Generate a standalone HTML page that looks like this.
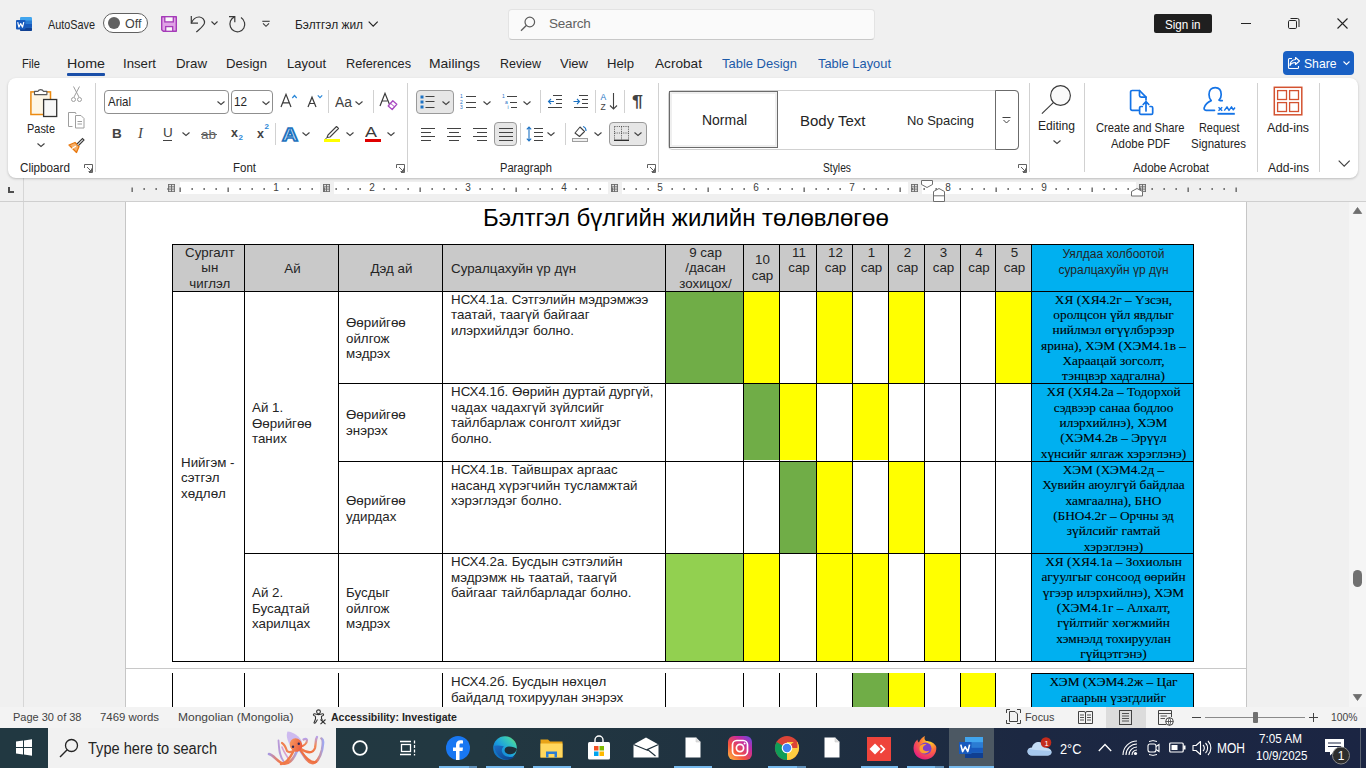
<!DOCTYPE html><html><head><meta charset="utf-8"><style>
*{margin:0;padding:0;box-sizing:border-box}
html,body{width:1366px;height:768px;overflow:hidden;background:#f0f0f0;font-family:"Liberation Sans",sans-serif;color:#242424}
.ab{position:absolute}
.t{position:absolute;white-space:nowrap;line-height:1}
svg{position:absolute;overflow:visible}
.doc{font-family:"Liberation Sans",sans-serif;color:#000}
.ser{font-family:"Liberation Serif",serif;color:#000;-webkit-text-stroke:0.1px #000}
</style></head><body>

<div class="ab" style="left:23px;top:201px;width:1px;height:506px;background:#d6d6d6"></div>
<div class="ab" style="left:126px;top:202px;width:1120px;height:505px;background:#fff"></div>
<div class="ab" style="left:125px;top:202px;width:1px;height:505px;background:#c6c6c6"></div>
<div class="ab" style="left:1246px;top:202px;width:1px;height:505px;background:#c6c6c6"></div>
<div class="ab" style="left:1349px;top:201px;width:17px;height:506px;background:#f5f5f5"></div>
<svg style="left:1353px;top:207px;" width="9" height="7" viewBox="0 0 9 7"><path d="M4.5 0.5 L8.7 6.5 L0.3 6.5 Z" fill="#6e6e6e" stroke="#6e6e6e" stroke-width="0.8" stroke-linejoin="round"/></svg>
<svg style="left:1353px;top:694px;" width="9" height="7" viewBox="0 0 9 7"><path d="M4.5 6.5 L8.7 0.5 L0.3 0.5 Z" fill="#6e6e6e" stroke="#6e6e6e" stroke-width="0.8" stroke-linejoin="round"/></svg>
<div class="ab" style="left:1353px;top:570px;width:9px;height:17px;background:#707070;border-radius:4.5px"></div>
<div class="ab" style="left:126px;top:668px;width:1120px;height:1px;background:#c8c8c8"></div>
<div class="t doc" style="left:483.00px;top:206.48px;font-size:24px;">Бэлтгэл бүлгийн жилийн төлөвлөгөө</div>
<div class="ab" style="left:172px;top:244px;width:859px;height:47px;background:#c9c9c9"></div>
<div class="ab" style="left:1031px;top:244px;width:162px;height:47px;background:#00b0f0"></div>
<div class="ab" style="left:665px;top:291px;width:78px;height:92px;background:#70ad47"></div>
<div class="ab" style="left:743px;top:291px;width:36px;height:92px;background:#ffff00"></div>
<div class="ab" style="left:816px;top:291px;width:36px;height:92px;background:#ffff00"></div>
<div class="ab" style="left:888px;top:291px;width:36px;height:92px;background:#ffff00"></div>
<div class="ab" style="left:995px;top:291px;width:36px;height:92px;background:#ffff00"></div>
<div class="ab" style="left:1031px;top:291px;width:162px;height:92px;background:#00b0f0"></div>
<div class="ab" style="left:743px;top:383px;width:36px;height:77px;background:#70ad47"></div>
<div class="ab" style="left:779px;top:383px;width:37px;height:77px;background:#ffff00"></div>
<div class="ab" style="left:852px;top:383px;width:36px;height:77px;background:#ffff00"></div>
<div class="ab" style="left:1031px;top:383px;width:162px;height:78px;background:#00b0f0"></div>
<div class="ab" style="left:779px;top:461px;width:37px;height:92px;background:#70ad47"></div>
<div class="ab" style="left:816px;top:461px;width:36px;height:92px;background:#ffff00"></div>
<div class="ab" style="left:888px;top:461px;width:36px;height:92px;background:#ffff00"></div>
<div class="ab" style="left:1031px;top:461px;width:162px;height:92px;background:#00b0f0"></div>
<div class="ab" style="left:665px;top:553px;width:78px;height:108px;background:#92d050"></div>
<div class="ab" style="left:743px;top:553px;width:36px;height:108px;background:#ffff00"></div>
<div class="ab" style="left:816px;top:553px;width:36px;height:108px;background:#ffff00"></div>
<div class="ab" style="left:852px;top:553px;width:36px;height:108px;background:#ffff00"></div>
<div class="ab" style="left:924px;top:553px;width:36px;height:108px;background:#ffff00"></div>
<div class="ab" style="left:1031px;top:553px;width:162px;height:108px;background:#00b0f0"></div>
<div class="ab" style="left:172px;top:244px;width:1px;height:418px;background:#000"></div>
<div class="ab" style="left:244px;top:244px;width:1px;height:418px;background:#000"></div>
<div class="ab" style="left:338px;top:244px;width:1px;height:418px;background:#000"></div>
<div class="ab" style="left:442px;top:244px;width:1px;height:418px;background:#000"></div>
<div class="ab" style="left:665px;top:244px;width:1px;height:418px;background:#000"></div>
<div class="ab" style="left:743px;top:244px;width:1px;height:418px;background:#000"></div>
<div class="ab" style="left:779px;top:244px;width:1px;height:418px;background:#000"></div>
<div class="ab" style="left:816px;top:244px;width:1px;height:418px;background:#000"></div>
<div class="ab" style="left:852px;top:244px;width:1px;height:418px;background:#000"></div>
<div class="ab" style="left:888px;top:244px;width:1px;height:418px;background:#000"></div>
<div class="ab" style="left:924px;top:244px;width:1px;height:418px;background:#000"></div>
<div class="ab" style="left:960px;top:244px;width:1px;height:418px;background:#000"></div>
<div class="ab" style="left:995px;top:244px;width:1px;height:418px;background:#000"></div>
<div class="ab" style="left:1031px;top:244px;width:1px;height:418px;background:#000"></div>
<div class="ab" style="left:1193px;top:244px;width:1px;height:418px;background:#000"></div>
<div class="ab" style="left:172px;top:244px;width:1022px;height:1px;background:#000"></div>
<div class="ab" style="left:172px;top:291px;width:1022px;height:1px;background:#000"></div>
<div class="ab" style="left:172px;top:661px;width:1022px;height:1px;background:#000"></div>
<div class="ab" style="left:338px;top:383px;width:856px;height:1px;background:#000"></div>
<div class="ab" style="left:338px;top:461px;width:856px;height:1px;background:#000"></div>
<div class="ab" style="left:244px;top:553px;width:950px;height:1px;background:#000"></div>
<div class="ab" style="left:852px;top:673px;width:36px;height:34px;background:#70ad47"></div>
<div class="ab" style="left:888px;top:673px;width:36px;height:34px;background:#ffff00"></div>
<div class="ab" style="left:960px;top:673px;width:35px;height:34px;background:#ffff00"></div>
<div class="ab" style="left:1031px;top:673px;width:162px;height:34px;background:#00b0f0"></div>
<div class="ab" style="left:172px;top:673px;width:1px;height:34px;background:#000"></div>
<div class="ab" style="left:244px;top:673px;width:1px;height:34px;background:#000"></div>
<div class="ab" style="left:338px;top:673px;width:1px;height:34px;background:#000"></div>
<div class="ab" style="left:442px;top:673px;width:1px;height:34px;background:#000"></div>
<div class="ab" style="left:665px;top:673px;width:1px;height:34px;background:#000"></div>
<div class="ab" style="left:743px;top:673px;width:1px;height:34px;background:#000"></div>
<div class="ab" style="left:779px;top:673px;width:1px;height:34px;background:#000"></div>
<div class="ab" style="left:816px;top:673px;width:1px;height:34px;background:#000"></div>
<div class="ab" style="left:852px;top:673px;width:1px;height:34px;background:#000"></div>
<div class="ab" style="left:888px;top:673px;width:1px;height:34px;background:#000"></div>
<div class="ab" style="left:924px;top:673px;width:1px;height:34px;background:#000"></div>
<div class="ab" style="left:960px;top:673px;width:1px;height:34px;background:#000"></div>
<div class="ab" style="left:995px;top:673px;width:1px;height:34px;background:#000"></div>
<div class="ab" style="left:1031px;top:673px;width:1px;height:34px;background:#000"></div>
<div class="ab" style="left:1193px;top:673px;width:1px;height:34px;background:#000"></div>
<div class="ab" style="left:1031px;top:673px;width:163px;height:1px;background:#000"></div>
<div class="t" style="left:173.80px;top:245.72px;width:72px;text-align:center;font-size:13.33px;">Сургалт</div>
<div class="t" style="left:173.80px;top:261.17px;width:72px;text-align:center;font-size:13.33px;">ын</div>
<div class="t" style="left:173.80px;top:276.62px;width:72px;text-align:center;font-size:13.33px;">чиглэл</div>
<div class="t" style="left:245.50px;top:261.92px;width:94px;text-align:center;font-size:13.33px;">Ай</div>
<div class="t" style="left:339.50px;top:261.92px;width:104px;text-align:center;font-size:13.33px;">Дэд ай</div>
<div class="t" style="left:451.00px;top:261.92px;font-size:13.33px;">Суралцахуйн үр дүн</div>
<div class="t" style="left:666.50px;top:245.72px;width:78px;text-align:center;font-size:13.33px;">9 сар</div>
<div class="t" style="left:666.50px;top:261.17px;width:78px;text-align:center;font-size:13.33px;">/дасан</div>
<div class="t" style="left:666.50px;top:276.62px;width:78px;text-align:center;font-size:13.33px;">зохицох/</div>
<div class="t" style="left:744.50px;top:253.22px;width:36px;text-align:center;font-size:13.33px;">10</div>
<div class="t" style="left:744.50px;top:268.67px;width:36px;text-align:center;font-size:13.33px;">сар</div>
<div class="t" style="left:779.00px;top:245.72px;width:40px;text-align:center;font-size:13.33px;">11</div>
<div class="t" style="left:779.00px;top:261.17px;width:40px;text-align:center;font-size:13.33px;">сар</div>
<div class="t" style="left:815.50px;top:245.72px;width:40px;text-align:center;font-size:13.33px;">12</div>
<div class="t" style="left:815.50px;top:261.17px;width:40px;text-align:center;font-size:13.33px;">сар</div>
<div class="t" style="left:851.50px;top:245.72px;width:40px;text-align:center;font-size:13.33px;">1</div>
<div class="t" style="left:851.50px;top:261.17px;width:40px;text-align:center;font-size:13.33px;">сар</div>
<div class="t" style="left:887.50px;top:245.72px;width:40px;text-align:center;font-size:13.33px;">2</div>
<div class="t" style="left:887.50px;top:261.17px;width:40px;text-align:center;font-size:13.33px;">сар</div>
<div class="t" style="left:923.50px;top:245.72px;width:40px;text-align:center;font-size:13.33px;">3</div>
<div class="t" style="left:923.50px;top:261.17px;width:40px;text-align:center;font-size:13.33px;">сар</div>
<div class="t" style="left:959.00px;top:245.72px;width:40px;text-align:center;font-size:13.33px;">4</div>
<div class="t" style="left:959.00px;top:261.17px;width:40px;text-align:center;font-size:13.33px;">сар</div>
<div class="t" style="left:994.50px;top:245.72px;width:40px;text-align:center;font-size:13.33px;">5</div>
<div class="t" style="left:994.50px;top:261.17px;width:40px;text-align:center;font-size:13.33px;">сар</div>
<div class="t" style="left:1033.50px;top:248.24px;width:160px;text-align:center;font-size:12px;">Уялдаа холбоотой</div>
<div class="t" style="left:1033.50px;top:263.84px;width:160px;text-align:center;font-size:12px;">суралцахуйн үр дүн</div>
<div class="t" style="left:181.00px;top:455.72px;font-size:13.33px;">Нийгэм -</div>
<div class="t" style="left:181.00px;top:471.17px;font-size:13.33px;">сэтгэл</div>
<div class="t" style="left:181.00px;top:486.62px;font-size:13.33px;">хөдлөл</div>
<div class="t" style="left:252.00px;top:401.32px;font-size:13.33px;">Ай 1.</div>
<div class="t" style="left:252.00px;top:416.77px;font-size:13.33px;">Өөрийгөө</div>
<div class="t" style="left:252.00px;top:432.22px;font-size:13.33px;">таних</div>
<div class="t" style="left:252.00px;top:586.32px;font-size:13.33px;">Ай 2.</div>
<div class="t" style="left:252.00px;top:601.77px;font-size:13.33px;">Бусадтай</div>
<div class="t" style="left:252.00px;top:617.22px;font-size:13.33px;">харилцах</div>
<div class="t" style="left:346.00px;top:316.32px;font-size:13.33px;">Өөрийгөө</div>
<div class="t" style="left:346.00px;top:331.77px;font-size:13.33px;">ойлгож</div>
<div class="t" style="left:346.00px;top:347.22px;font-size:13.33px;">мэдрэх</div>
<div class="t" style="left:346.00px;top:408.32px;font-size:13.33px;">Өөрийгөө</div>
<div class="t" style="left:346.00px;top:423.77px;font-size:13.33px;">энэрэх</div>
<div class="t" style="left:346.00px;top:494.32px;font-size:13.33px;">Өөрийгөө</div>
<div class="t" style="left:346.00px;top:509.77px;font-size:13.33px;">удирдах</div>
<div class="t" style="left:346.00px;top:586.32px;font-size:13.33px;">Бусдыг</div>
<div class="t" style="left:346.00px;top:601.77px;font-size:13.33px;">ойлгож</div>
<div class="t" style="left:346.00px;top:617.22px;font-size:13.33px;">мэдрэх</div>
<div class="t" style="left:451.00px;top:293.02px;font-size:13.33px;">НСХ4.1а. Сэтгэлийн мэдрэмжээ</div>
<div class="t" style="left:451.00px;top:308.47px;font-size:13.33px;">таатай, таагүй байгааг</div>
<div class="t" style="left:451.00px;top:323.92px;font-size:13.33px;">илэрхийлдэг болно.</div>
<div class="t" style="left:451.00px;top:385.32px;font-size:13.33px;">НСХ4.1б. Өөрийн дуртай дургүй,</div>
<div class="t" style="left:451.00px;top:400.77px;font-size:13.33px;">чадах чадахгүй зүйлсийг</div>
<div class="t" style="left:451.00px;top:416.22px;font-size:13.33px;">тайлбарлаж сонголт хийдэг</div>
<div class="t" style="left:451.00px;top:431.67px;font-size:13.33px;">болно.</div>
<div class="t" style="left:451.00px;top:463.32px;font-size:13.33px;">НСХ4.1в. Тайвшрах аргаас</div>
<div class="t" style="left:451.00px;top:478.77px;font-size:13.33px;">насанд хүрэгчийн тусламжтай</div>
<div class="t" style="left:451.00px;top:494.22px;font-size:13.33px;">хэрэглэдэг болно.</div>
<div class="t" style="left:451.00px;top:555.32px;font-size:13.33px;">НСХ4.2а. Бусдын сэтгэлийн</div>
<div class="t" style="left:451.00px;top:570.77px;font-size:13.33px;">мэдрэмж нь таатай, таагүй</div>
<div class="t" style="left:451.00px;top:586.22px;font-size:13.33px;">байгааг тайлбарладаг болно.</div>
<div class="t" style="left:451.00px;top:675.32px;font-size:13.33px;">НСХ4.2б. Бусдын нөхцөл</div>
<div class="t" style="left:451.00px;top:690.77px;font-size:13.33px;">байдалд тохируулан энэрэх</div>
<div class="ab" style="left:1032px;top:292px;width:161px;height:91px;overflow:hidden">
<div class="t ser" style="left:-19px;width:201px;text-align:center;top:0.54px;font-size:13.33px">ХЯ (ХЯ4.2г – Үзсэн,</div>
<div class="t ser" style="left:-19px;width:201px;text-align:center;top:15.89px;font-size:13.33px">оролцсон үйл явдлыг</div>
<div class="t ser" style="left:-19px;width:201px;text-align:center;top:31.24px;font-size:13.33px">нийлмэл өгүүлбэрээр</div>
<div class="t ser" style="left:-19px;width:201px;text-align:center;top:46.59px;font-size:13.33px">ярина), ХЭМ (ХЭМ4.1в –</div>
<div class="t ser" style="left:-19px;width:201px;text-align:center;top:61.94px;font-size:13.33px">Хараацай зогсолт,</div>
<div class="t ser" style="left:-19px;width:201px;text-align:center;top:77.29px;font-size:13.33px">тэнцвэр хадгална)</div>
</div>
<div class="ab" style="left:1032px;top:384px;width:161px;height:77px;overflow:hidden">
<div class="t ser" style="left:-19px;width:201px;text-align:center;top:1.34px;font-size:13.33px">ХЯ (ХЯ4.2а – Тодорхой</div>
<div class="t ser" style="left:-19px;width:201px;text-align:center;top:16.69px;font-size:13.33px">сэдвээр санаа бодлоо</div>
<div class="t ser" style="left:-19px;width:201px;text-align:center;top:32.04px;font-size:13.33px">илэрхийлнэ), ХЭМ</div>
<div class="t ser" style="left:-19px;width:201px;text-align:center;top:47.39px;font-size:13.33px">(ХЭМ4.2в – Эрүүл</div>
<div class="t ser" style="left:-19px;width:201px;text-align:center;top:62.74px;font-size:13.33px">хүнсийг ялгаж хэрэглэнэ)</div>
</div>
<div class="ab" style="left:1032px;top:462px;width:161px;height:91px;overflow:hidden">
<div class="t ser" style="left:-19px;width:201px;text-align:center;top:0.84px;font-size:13.33px">ХЭМ (ХЭМ4.2д –</div>
<div class="t ser" style="left:-19px;width:201px;text-align:center;top:16.19px;font-size:13.33px">Хувийн аюулгүй байдлаа</div>
<div class="t ser" style="left:-19px;width:201px;text-align:center;top:31.54px;font-size:13.33px">хамгаална), БНО</div>
<div class="t ser" style="left:-19px;width:201px;text-align:center;top:46.89px;font-size:13.33px">(БНО4.2г – Орчны эд</div>
<div class="t ser" style="left:-19px;width:201px;text-align:center;top:62.24px;font-size:13.33px">зүйлсийг гамтай</div>
<div class="t ser" style="left:-19px;width:201px;text-align:center;top:77.59px;font-size:13.33px">хэрэглэнэ)</div>
</div>
<div class="ab" style="left:1032px;top:554px;width:161px;height:107px;overflow:hidden">
<div class="t ser" style="left:-19px;width:201px;text-align:center;top:0.84px;font-size:13.33px">ХЯ (ХЯ4.1а – Зохиолын</div>
<div class="t ser" style="left:-19px;width:201px;text-align:center;top:16.19px;font-size:13.33px">агуулгыг сонсоод өөрийн</div>
<div class="t ser" style="left:-19px;width:201px;text-align:center;top:31.54px;font-size:13.33px">үгээр илэрхийлнэ), ХЭМ</div>
<div class="t ser" style="left:-19px;width:201px;text-align:center;top:46.89px;font-size:13.33px">(ХЭМ4.1г – Алхалт,</div>
<div class="t ser" style="left:-19px;width:201px;text-align:center;top:62.24px;font-size:13.33px">гүйлтийг хөгжмийн</div>
<div class="t ser" style="left:-19px;width:201px;text-align:center;top:77.59px;font-size:13.33px">хэмнэлд тохируулан</div>
<div class="t ser" style="left:-19px;width:201px;text-align:center;top:92.94px;font-size:13.33px">гүйцэтгэнэ)</div>
</div>
<div class="ab" style="left:1032px;top:674px;width:161px;height:33px;overflow:hidden">
<div class="t ser" style="left:-19px;width:201px;text-align:center;top:1.34px;font-size:13.33px">ХЭМ (ХЭМ4.2ж – Цаг</div>
<div class="t ser" style="left:-19px;width:201px;text-align:center;top:16.69px;font-size:13.33px">агаарын үзэгдлийг</div>
</div>
<div class="ab" style="left:0px;top:178px;width:1366px;height:23px;background:#f0f0f0"></div>
<div class="ab" style="left:0px;top:201px;width:1366px;height:1px;background:#cfcfcf"></div>
<div class="ab" style="left:23px;top:178px;width:1px;height:23px;background:#d6d6d6"></div>
<div class="ab" style="left:8px;top:187px;width:6px;height:6px;border-left:2px solid #505050;border-bottom:2px solid #505050"></div>
<div class="ab" style="left:180px;top:182px;width:140px;height:12px;background:#fff"></div>
<div class="ab" style="left:334px;top:182px;width:274px;height:12px;background:#fff"></div>
<div class="ab" style="left:622px;top:182px;width:286px;height:12px;background:#fff"></div>
<div class="ab" style="left:922px;top:182px;width:214px;height:12px;background:#fff"></div>
<div class="t" style="left:266.00px;top:183.34px;width:20px;text-align:center;font-size:10px;color:#404040">1</div>
<div class="t" style="left:362.00px;top:183.34px;width:20px;text-align:center;font-size:10px;color:#404040">2</div>
<div class="t" style="left:458.00px;top:183.34px;width:20px;text-align:center;font-size:10px;color:#404040">3</div>
<div class="t" style="left:554.00px;top:183.34px;width:20px;text-align:center;font-size:10px;color:#404040">4</div>
<div class="t" style="left:650.00px;top:183.34px;width:20px;text-align:center;font-size:10px;color:#404040">5</div>
<div class="t" style="left:746.00px;top:183.34px;width:20px;text-align:center;font-size:10px;color:#404040">6</div>
<div class="t" style="left:842.00px;top:183.34px;width:20px;text-align:center;font-size:10px;color:#404040">7</div>
<div class="t" style="left:938.00px;top:183.34px;width:20px;text-align:center;font-size:10px;color:#404040">8</div>
<div class="t" style="left:1034.00px;top:183.34px;width:20px;text-align:center;font-size:10px;color:#404040">9</div>
<svg style="left:128px;top:184px;" width="1240" height="14" viewBox="0 0 1240 14"><rect x="3.5" y="3.5" width="1.3" height="4.5" fill="#5a5a5a"/><rect x="15.5" y="4" width="1.3" height="2" fill="#5a5a5a"/><rect x="27.5" y="4" width="1.3" height="2" fill="#5a5a5a"/><rect x="39.5" y="4" width="1.3" height="2" fill="#5a5a5a"/><rect x="51.5" y="3.5" width="1.3" height="4.5" fill="#5a5a5a"/><rect x="63.5" y="4" width="1.3" height="2" fill="#5a5a5a"/><rect x="75.5" y="4" width="1.3" height="2" fill="#5a5a5a"/><rect x="87.5" y="4" width="1.3" height="2" fill="#5a5a5a"/><rect x="99.5" y="3.5" width="1.3" height="4.5" fill="#5a5a5a"/><rect x="111.5" y="4" width="1.3" height="2" fill="#5a5a5a"/><rect x="123.5" y="4" width="1.3" height="2" fill="#5a5a5a"/><rect x="135.5" y="4" width="1.3" height="2" fill="#5a5a5a"/><rect x="159.5" y="4" width="1.3" height="2" fill="#5a5a5a"/><rect x="171.5" y="4" width="1.3" height="2" fill="#5a5a5a"/><rect x="183.5" y="4" width="1.3" height="2" fill="#5a5a5a"/><rect x="195.5" y="3.5" width="1.3" height="4.5" fill="#5a5a5a"/><rect x="207.5" y="4" width="1.3" height="2" fill="#5a5a5a"/><rect x="219.5" y="4" width="1.3" height="2" fill="#5a5a5a"/><rect x="231.5" y="4" width="1.3" height="2" fill="#5a5a5a"/><rect x="255.5" y="4" width="1.3" height="2" fill="#5a5a5a"/><rect x="267.5" y="4" width="1.3" height="2" fill="#5a5a5a"/><rect x="279.5" y="4" width="1.3" height="2" fill="#5a5a5a"/><rect x="291.5" y="3.5" width="1.3" height="4.5" fill="#5a5a5a"/><rect x="303.5" y="4" width="1.3" height="2" fill="#5a5a5a"/><rect x="315.5" y="4" width="1.3" height="2" fill="#5a5a5a"/><rect x="327.5" y="4" width="1.3" height="2" fill="#5a5a5a"/><rect x="351.5" y="4" width="1.3" height="2" fill="#5a5a5a"/><rect x="363.5" y="4" width="1.3" height="2" fill="#5a5a5a"/><rect x="375.5" y="4" width="1.3" height="2" fill="#5a5a5a"/><rect x="387.5" y="3.5" width="1.3" height="4.5" fill="#5a5a5a"/><rect x="399.5" y="4" width="1.3" height="2" fill="#5a5a5a"/><rect x="411.5" y="4" width="1.3" height="2" fill="#5a5a5a"/><rect x="423.5" y="4" width="1.3" height="2" fill="#5a5a5a"/><rect x="447.5" y="4" width="1.3" height="2" fill="#5a5a5a"/><rect x="459.5" y="4" width="1.3" height="2" fill="#5a5a5a"/><rect x="471.5" y="4" width="1.3" height="2" fill="#5a5a5a"/><rect x="483.5" y="3.5" width="1.3" height="4.5" fill="#5a5a5a"/><rect x="495.5" y="4" width="1.3" height="2" fill="#5a5a5a"/><rect x="507.5" y="4" width="1.3" height="2" fill="#5a5a5a"/><rect x="519.5" y="4" width="1.3" height="2" fill="#5a5a5a"/><rect x="543.5" y="4" width="1.3" height="2" fill="#5a5a5a"/><rect x="555.5" y="4" width="1.3" height="2" fill="#5a5a5a"/><rect x="567.5" y="4" width="1.3" height="2" fill="#5a5a5a"/><rect x="579.5" y="3.5" width="1.3" height="4.5" fill="#5a5a5a"/><rect x="591.5" y="4" width="1.3" height="2" fill="#5a5a5a"/><rect x="603.5" y="4" width="1.3" height="2" fill="#5a5a5a"/><rect x="615.5" y="4" width="1.3" height="2" fill="#5a5a5a"/><rect x="639.5" y="4" width="1.3" height="2" fill="#5a5a5a"/><rect x="651.5" y="4" width="1.3" height="2" fill="#5a5a5a"/><rect x="663.5" y="4" width="1.3" height="2" fill="#5a5a5a"/><rect x="675.5" y="3.5" width="1.3" height="4.5" fill="#5a5a5a"/><rect x="687.5" y="4" width="1.3" height="2" fill="#5a5a5a"/><rect x="699.5" y="4" width="1.3" height="2" fill="#5a5a5a"/><rect x="711.5" y="4" width="1.3" height="2" fill="#5a5a5a"/><rect x="735.5" y="4" width="1.3" height="2" fill="#5a5a5a"/><rect x="747.5" y="4" width="1.3" height="2" fill="#5a5a5a"/><rect x="759.5" y="4" width="1.3" height="2" fill="#5a5a5a"/><rect x="771.5" y="3.5" width="1.3" height="4.5" fill="#5a5a5a"/><rect x="783.5" y="4" width="1.3" height="2" fill="#5a5a5a"/><rect x="795.5" y="4" width="1.3" height="2" fill="#5a5a5a"/><rect x="807.5" y="4" width="1.3" height="2" fill="#5a5a5a"/><rect x="831.5" y="4" width="1.3" height="2" fill="#5a5a5a"/><rect x="843.5" y="4" width="1.3" height="2" fill="#5a5a5a"/><rect x="855.5" y="4" width="1.3" height="2" fill="#5a5a5a"/><rect x="867.5" y="3.5" width="1.3" height="4.5" fill="#5a5a5a"/><rect x="879.5" y="4" width="1.3" height="2" fill="#5a5a5a"/><rect x="891.5" y="4" width="1.3" height="2" fill="#5a5a5a"/><rect x="903.5" y="4" width="1.3" height="2" fill="#5a5a5a"/><rect x="927.5" y="4" width="1.3" height="2" fill="#5a5a5a"/><rect x="939.5" y="4" width="1.3" height="2" fill="#5a5a5a"/><rect x="951.5" y="4" width="1.3" height="2" fill="#5a5a5a"/><rect x="963.5" y="3.5" width="1.3" height="4.5" fill="#5a5a5a"/><rect x="975.5" y="4" width="1.3" height="2" fill="#5a5a5a"/><rect x="987.5" y="4" width="1.3" height="2" fill="#5a5a5a"/><rect x="999.5" y="4" width="1.3" height="2" fill="#5a5a5a"/><rect x="1011.5" y="3.5" width="1.3" height="4.5" fill="#5a5a5a"/><rect x="1023.5" y="4" width="1.3" height="2" fill="#5a5a5a"/><rect x="1035.5" y="4" width="1.3" height="2" fill="#5a5a5a"/><rect x="1047.5" y="4" width="1.3" height="2" fill="#5a5a5a"/><rect x="1059.5" y="3.5" width="1.3" height="4.5" fill="#5a5a5a"/><rect x="1071.5" y="4" width="1.3" height="2" fill="#5a5a5a"/><rect x="1083.5" y="4" width="1.3" height="2" fill="#5a5a5a"/><rect x="1095.5" y="4" width="1.3" height="2" fill="#5a5a5a"/><rect x="1107.5" y="3.5" width="1.3" height="4.5" fill="#5a5a5a"/></svg>
<svg style="left:168.0px;top:184px" width="7" height="8" viewBox="0 0 7 8"><path d="M0 0.6H7M0 2.85H7M0 5.1H7M0 7.35H7M0.6 0V8M3.5 0V8M6.4 0V8" stroke="#6e6e6e" stroke-width="1"/></svg>
<svg style="left:322.8px;top:184px" width="7" height="8" viewBox="0 0 7 8"><path d="M0 0.6H7M0 2.85H7M0 5.1H7M0 7.35H7M0.6 0V8M3.5 0V8M6.4 0V8" stroke="#6e6e6e" stroke-width="1"/></svg>
<svg style="left:611.0px;top:184px" width="7" height="8" viewBox="0 0 7 8"><path d="M0 0.6H7M0 2.85H7M0 5.1H7M0 7.35H7M0.6 0V8M3.5 0V8M6.4 0V8" stroke="#6e6e6e" stroke-width="1"/></svg>
<svg style="left:911.0px;top:184px" width="7" height="8" viewBox="0 0 7 8"><path d="M0 0.6H7M0 2.85H7M0 5.1H7M0 7.35H7M0.6 0V8M3.5 0V8M6.4 0V8" stroke="#6e6e6e" stroke-width="1"/></svg>
<svg style="left:1139.1px;top:184px" width="7" height="8" viewBox="0 0 7 8"><path d="M0 0.6H7M0 2.85H7M0 5.1H7M0 7.35H7M0.6 0V8M3.5 0V8M6.4 0V8" stroke="#6e6e6e" stroke-width="1"/></svg>
<svg style="left:921px;top:180px;" width="12" height="8" viewBox="0 0 12 8"><path d="M0.5 0.5H11.5V4.5L6 7.5L0.5 4.5Z" fill="#fff" stroke="#6e6e6e" stroke-width="1"/></svg>
<svg style="left:933px;top:187.5px;" width="12" height="14" viewBox="0 0 12 14"><path d="M0.5 13.5V3.5L6 0.5L11.5 3.5V13.5Z M0.5 7.8H11.5" fill="#fff" stroke="#6e6e6e" stroke-width="1"/></svg>
<svg style="left:1131px;top:187.5px;" width="12" height="8.5" viewBox="0 0 12 8.5"><path d="M0.5 8V3.5L6 0.5L11.5 3.5V8Z" fill="#fff" stroke="#6e6e6e" stroke-width="1"/></svg>
<svg style="left:16px;top:16px;" width="16" height="16" viewBox="0 0 16 16"><rect x="4" y="1" width="12" height="14" rx="1.2" fill="#41a5ee"/>
<rect x="4" y="4.5" width="12" height="3.5" fill="#2b7cd3"/><rect x="4" y="8" width="12" height="3.5" fill="#185abd"/><rect x="4" y="11.5" width="12" height="3.5" rx="1" fill="#103f91"/>
<rect x="0" y="4" width="9.5" height="9.5" rx="1" fill="#185abd"/>
<path d="M1.7 6.2 L2.9 11.2 L4.7 7.6 L6.5 11.2 L7.8 6.2" stroke="#fff" stroke-width="1.2" fill="none" stroke-linejoin="round"/></svg>
<div class="t" style="left:48.00px;top:17.50px;font-size:13px;color:#242424;transform-origin:0 0;transform:scaleX(0.8337)">AutoSave</div>
<div class="ab" style="left:103px;top:13px;width:45px;height:20px;border:1px solid #616161;border-radius:10px;background:#fff"></div>
<div class="ab" style="left:108px;top:17px;width:12px;height:12px;border-radius:6px;background:#616161"></div>
<div class="t" style="left:125.00px;top:17.62px;font-size:12.5px;color:#424242">Off</div>
<svg style="left:161px;top:16px;" width="16" height="16" viewBox="0 0 16 16"><path d="M0.7 0.7H15.3V15.3H2.3L0.7 13.7Z" fill="#e0a3e6" stroke="#a53bb8" stroke-width="1.4" stroke-linejoin="round"/>
<rect x="3.8" y="0.7" width="8.5" height="5.2" fill="#fafafa" stroke="#a53bb8" stroke-width="1.3"/><rect x="4.7" y="10.6" width="7" height="4.7" fill="#fafafa" stroke="#a53bb8" stroke-width="1.3"/></svg>
<svg style="left:189px;top:15px;" width="18" height="18" viewBox="0 0 18 18"><path d="M2.3 1V8.2H9" fill="none" stroke="#3a3a3a" stroke-width="1.2"/><path d="M2.3 8.2C4 4 7.5 1.8 10.5 2C13.5 2.3 15.8 5 15.5 8C15.2 10.5 13 12 7.3 17" fill="none" stroke="#3a3a3a" stroke-width="1.2"/></svg>
<svg style="left:211px;top:21px;" width="8" height="5" viewBox="0 0 8 5"><path d="M0.5 0.5L3.5 3.5L6.5 0.5" fill="none" stroke="#3a3a3a" stroke-width="1.1"/></svg>
<svg style="left:228px;top:15px;" width="19" height="19" viewBox="0 0 19 19"><path d="M1 1.6H6.8V7.3" fill="none" stroke="#3a3a3a" stroke-width="1.2"/><path d="M6.8 1.6C2.5 3.5 1 8 2.5 12C4 15.8 8 17.5 11.5 16.5C15.5 15.3 17.5 11.5 16.5 7.5C16 5 14.5 3.5 13 2.5" fill="none" stroke="#3a3a3a" stroke-width="1.2"/></svg>
<svg style="left:262px;top:20px;" width="8" height="8" viewBox="0 0 8 8"><path d="M0.3 1.3H7.7" stroke="#3a3a3a" stroke-width="1.1"/><path d="M1 3.3L4 6.3L7 3.3" fill="none" stroke="#3a3a3a" stroke-width="1.1"/></svg>
<div class="t" style="left:295.00px;top:17.80px;font-size:13px;color:#242424;transform-origin:0 0;transform:scaleX(0.9158)">Бэлтгэл жил</div>
<svg style="left:368px;top:21px;" width="11" height="7" viewBox="0 0 11 7"><path d="M0.7 0.7L5.2 5.2L9.7 0.7" fill="none" stroke="#242424" stroke-width="1.2"/></svg>
<div class="ab" style="left:508px;top:9px;width:367px;height:31px;background:#fafafa;border:1px solid #e3e3e3;border-bottom-color:#c8c8c8;border-radius:4px"></div>
<svg style="left:520px;top:16px;" width="16" height="16" viewBox="0 0 16 16"><circle cx="9.8" cy="6" r="4.8" fill="none" stroke="#5c5c5c" stroke-width="1.2"/><path d="M6.3 9.5L1 14.8" stroke="#5c5c5c" stroke-width="1.3"/></svg>
<div class="t" style="left:549.00px;top:17.37px;font-size:13.5px;color:#616161;letter-spacing:-0.2px">Search</div>
<div class="ab" style="left:1154px;top:14px;width:58px;height:19px;background:#1f1f1f;border-radius:2px"></div>
<div class="t" style="left:1164.80px;top:17.50px;font-size:13px;color:#fff;transform-origin:0 0;transform:scaleX(0.8956)">Sign in</div>
<div class="ab" style="left:1241px;top:23px;width:10px;height:1px;background:#242424"></div>
<svg style="left:1288px;top:18px;" width="12" height="12" viewBox="0 0 12 12"><rect x="0.5" y="2.5" width="8" height="8" rx="1.2" fill="none" stroke="#242424"/><path d="M2.5 0.5H9.5A1.5 1.5 0 0 1 11 2V9" fill="none" stroke="#242424"/></svg>
<svg style="left:1337px;top:18px;" width="12" height="12" viewBox="0 0 12 12"><path d="M0.5 0.5L10.5 10.5M10.5 0.5L0.5 10.5" stroke="#242424" stroke-width="1.1"/></svg>
<div class="t" style="left:22.00px;top:56.77px;font-size:13.5px;color:#242424;transform-origin:0 0;transform:scaleX(0.8270)">File</div>
<div class="t" style="left:67.00px;top:56.77px;font-size:13.5px;color:#242424;transform-origin:0 0;transform:scaleX(1.0551)">Home</div>
<div class="t" style="left:123.00px;top:56.77px;font-size:13.5px;color:#242424;transform-origin:0 0;transform:scaleX(0.9773)">Insert</div>
<div class="t" style="left:176.00px;top:56.77px;font-size:13.5px;color:#242424;transform-origin:0 0;transform:scaleX(0.9836)">Draw</div>
<div class="t" style="left:226.00px;top:56.77px;font-size:13.5px;color:#242424;transform-origin:0 0;transform:scaleX(0.9755)">Design</div>
<div class="t" style="left:287.00px;top:56.77px;font-size:13.5px;color:#242424;transform-origin:0 0;transform:scaleX(0.9618)">Layout</div>
<div class="t" style="left:346.00px;top:56.77px;font-size:13.5px;color:#242424;transform-origin:0 0;transform:scaleX(0.9414)">References</div>
<div class="t" style="left:429.00px;top:56.77px;font-size:13.5px;color:#242424;transform-origin:0 0;transform:scaleX(1.0297)">Mailings</div>
<div class="t" style="left:500.00px;top:56.77px;font-size:13.5px;color:#242424;transform-origin:0 0;transform:scaleX(0.9262)">Review</div>
<div class="t" style="left:560.00px;top:56.77px;font-size:13.5px;color:#242424;transform-origin:0 0;transform:scaleX(0.9645)">View</div>
<div class="t" style="left:607.00px;top:56.77px;font-size:13.5px;color:#242424;transform-origin:0 0;transform:scaleX(0.9724)">Help</div>
<div class="t" style="left:655.00px;top:56.77px;font-size:13.5px;color:#242424;transform-origin:0 0;transform:scaleX(1.0101)">Acrobat</div>
<div class="t" style="left:722.00px;top:56.77px;font-size:13.5px;color:#1c5aa8;transform-origin:0 0;transform:scaleX(0.9610)">Table Design</div>
<div class="t" style="left:818.00px;top:56.77px;font-size:13.5px;color:#1c5aa8;transform-origin:0 0;transform:scaleX(0.9535)">Table Layout</div>
<div class="ab" style="left:67px;top:73px;width:38px;height:2.5px;background:#1a4fa8;border-radius:1px"></div>
<div class="ab" style="left:1283px;top:51px;width:71px;height:24px;background:#1960c4;border-radius:4px"></div>
<svg style="left:1287px;top:56px;" width="14" height="14" viewBox="0 0 14 14"><path d="M8.5 1.5L12.5 5L8.5 8.5V6.5C5.5 6.5 4 7.5 3 9.5C3 6 5 4 8.5 3.5Z" fill="none" stroke="#fff" stroke-width="1.1" stroke-linejoin="round"/><path d="M5 2.5H2.5A1 1 0 0 0 1.5 3.5V11.5A1 1 0 0 0 2.5 12.5H10.5A1 1 0 0 0 11.5 11.5V10" fill="none" stroke="#fff" stroke-width="1.1"/></svg>
<div class="t" style="left:1304.00px;top:56.57px;font-size:13.5px;color:#fff;transform-origin:0 0;transform:scaleX(0.9020)">Share</div>
<svg style="left:1343px;top:61px;" width="7" height="5" viewBox="0 0 7 5"><path d="M0.5 0.5L3.5 3.5L6.5 0.5" fill="none" stroke="#fff" stroke-width="1.1"/></svg>
<div class="ab" style="left:8px;top:78px;width:1350px;height:100px;background:#fff;border-radius:8px;box-shadow:0 1px 2.5px rgba(0,0,0,0.22)"></div>
<div class="ab" style="left:95px;top:83px;width:1px;height:89px;background:#d1d1d1"></div>
<div class="ab" style="left:407px;top:83px;width:1px;height:89px;background:#d1d1d1"></div>
<div class="ab" style="left:658px;top:83px;width:1px;height:89px;background:#d1d1d1"></div>
<div class="ab" style="left:1029px;top:83px;width:1px;height:89px;background:#d1d1d1"></div>
<div class="ab" style="left:1084px;top:83px;width:1px;height:89px;background:#d1d1d1"></div>
<div class="ab" style="left:1257px;top:83px;width:1px;height:89px;background:#d1d1d1"></div>
<div class="ab" style="left:1319px;top:83px;width:1px;height:89px;background:#d1d1d1"></div>
<svg style="left:30px;top:86px;" width="28" height="32" viewBox="0 0 28 32"><rect x="0.9" y="5.9" width="19.6" height="22.6" fill="#fdf6e6" stroke="#ec8a10" stroke-width="1.5"/>
<path d="M4.5 8.6V5.4H7.8A3.2 3.2 0 0 1 13.6 5.4H16.9V8.6Z" fill="#fff" stroke="#5a5a5a" stroke-width="1.15" stroke-linejoin="round"/>
<rect x="13.6" y="13.5" width="13.1" height="17" fill="#f7f7f7" stroke="#333" stroke-width="1.3"/></svg>
<div class="t" style="left:26.50px;top:122.20px;font-size:13px;;transform-origin:0 0;transform:scaleX(0.8421)">Paste</div>
<svg style="left:37px;top:143px;" width="8" height="5" viewBox="0 0 8 5"><path d="M0.5 0.5L4.0 3.5L7.5 0.5" fill="none" stroke="#424242" stroke-width="1.1"/></svg>
<svg style="left:71px;top:86px;" width="11" height="17" viewBox="0 0 11 17"><path d="M2.5 0.5L8 11M8.5 0.5L3 11" stroke="#9e9e9e" stroke-width="1"/><circle cx="2.5" cy="13.5" r="2" fill="none" stroke="#9e9e9e"/><circle cx="8.5" cy="13.5" r="2" fill="none" stroke="#9e9e9e"/></svg>
<svg style="left:68px;top:112px;" width="17" height="17" viewBox="0 0 17 17"><path d="M4.5 14.5H0.5V0.5H7.5L8 2" fill="none" stroke="#9e9e9e"/><path d="M7.5 3.5H13L16 6.5V16H7.5Z" fill="#fff" stroke="#9e9e9e"/><path d="M9.5 9.5H14M9.5 12H14" stroke="#9e9e9e"/></svg>
<svg style="left:68px;top:137px;" width="17" height="17" viewBox="0 0 17 17"><path d="M1 8L7 5.5L11 9.5L8.5 15.5Z" fill="#f5b06b" stroke="#e8780f" stroke-width="1.3" stroke-linejoin="round"/><path d="M4 11.5L8 9" stroke="#fff" stroke-width="1.2"/><path d="M9 7L14.5 1.5L16 3L10.5 8.5" fill="#fff" stroke="#3b3b3b" stroke-width="1.1"/></svg>
<div class="t" style="left:20.40px;top:162.02px;font-size:12.5px;color:#242424;transform-origin:0 0;transform:scaleX(0.9343)">Clipboard</div>
<svg style="left:84px;top:164px;" width="9" height="9" viewBox="0 0 9 9"><path d="M0.5 4V0.5H8.5V8.5H5" fill="none" stroke="#616161" stroke-width="1"/><path d="M3 3L7.5 7.5M7.5 4.5V7.5H4.5" fill="none" stroke="#616161" stroke-width="1"/></svg>
<div class="ab" style="left:104px;top:90px;width:125px;height:24px;border:1px solid #8f8f8f;border-radius:4px"></div>
<div class="t" style="left:107.50px;top:94.77px;font-size:13.5px;color:#242424;transform-origin:0 0;transform:scaleX(0.8514)">Arial</div>
<svg style="left:217px;top:101px;" width="8" height="5" viewBox="0 0 8 5"><path d="M0.5 0.5L4.0 3.5L7.5 0.5" fill="none" stroke="#424242" stroke-width="1.1"/></svg>
<div class="ab" style="left:231px;top:90px;width:42px;height:24px;border:1px solid #8f8f8f;border-radius:4px"></div>
<div class="t" style="left:234.00px;top:94.77px;font-size:13.5px;color:#242424;transform-origin:0 0;transform:scaleX(0.8649)">12</div>
<svg style="left:262px;top:101px;" width="8" height="5" viewBox="0 0 8 5"><path d="M0.5 0.5L4.0 3.5L7.5 0.5" fill="none" stroke="#424242" stroke-width="1.1"/></svg>
<svg style="left:280px;top:92px;" width="18" height="17" viewBox="0 0 18 17"><path d="M1 15L6 2.3L11 15M2.8 10.8H9.2" fill="none" stroke="#3a3a3a" stroke-width="1.2"/><path d="M12.3 6L14.5 3.5L16.7 6" fill="none" stroke="#2b88d8" stroke-width="1.2"/></svg>
<svg style="left:307px;top:93px;" width="16" height="15" viewBox="0 0 16 15"><path d="M1 14L5 4.2L9 14M2.5 10.5H7.5" fill="none" stroke="#3a3a3a" stroke-width="1.2"/><path d="M10.8 2.3L13 4.6L15.2 2.3" fill="none" stroke="#2b88d8" stroke-width="1.2"/></svg>
<div class="ab" style="left:328px;top:90px;width:1px;height:23px;background:#d1d1d1"></div>
<div class="t" style="left:335.00px;top:94.65px;font-size:14px;color:#424242;transform-origin:0 0;transform:scaleX(0.9927)">Aa</div>
<svg style="left:355px;top:101px;" width="8" height="5" viewBox="0 0 8 5"><path d="M0.5 0.5L4.0 3.5L7.5 0.5" fill="none" stroke="#424242" stroke-width="1.1"/></svg>
<div class="ab" style="left:373px;top:90px;width:1px;height:23px;background:#d1d1d1"></div>
<svg style="left:379px;top:91px;" width="19" height="19" viewBox="0 0 19 19"><path d="M1 15L6 2.3L10.5 13.5M3 10H8.3" fill="none" stroke="#3a3a3a" stroke-width="1.2"/><path d="M9.2 15L13.8 9.8L17.8 13.3L13.2 18.5Z" fill="#fff" stroke="#a848c0" stroke-width="1.3" stroke-linejoin="round"/><path d="M11.5 12.3L15.5 15.8" stroke="#a848c0" stroke-width="1"/></svg>
<div class="t" style="left:112.00px;top:127.07px;font-size:13.5px;font-weight:bold;color:#424242">B</div>
<div class="t" style="left:138.00px;top:125.73px;font-size:14.5px;font-style:italic;color:#424242;font-family:Liberation Serif">I</div>
<div class="t" style="left:163.00px;top:126.07px;font-size:13.5px;color:#424242">U</div>
<div class="ab" style="left:163px;top:139.5px;width:9px;height:1.2px;background:#424242"></div>
<svg style="left:182px;top:132px;" width="8" height="5" viewBox="0 0 8 5"><path d="M0.5 0.5L4.0 3.5L7.5 0.5" fill="none" stroke="#424242" stroke-width="1.1"/></svg>
<div class="t" style="left:201.00px;top:127.50px;font-size:13px;color:#616161;transform-origin:0 0;transform:scaleX(1.0367)">ab</div>
<div class="ab" style="left:201px;top:134px;width:16px;height:1.2px;background:#616161"></div>
<div class="t" style="left:231.00px;top:126.92px;font-size:12.5px;font-weight:bold;color:#424242">x</div>
<div class="t" style="left:238.50px;top:133.73px;font-size:8px;color:#2b88d8;font-weight:bold">2</div>
<div class="t" style="left:257.00px;top:127.92px;font-size:12.5px;font-weight:bold;color:#424242">x</div>
<div class="t" style="left:264.50px;top:123.23px;font-size:8px;color:#2b88d8;font-weight:bold">2</div>
<div class="ab" style="left:275px;top:123px;width:1px;height:22px;background:#d1d1d1"></div>
<div class="t" style="left:282.00px;top:124.92px;font-size:19px;color:#cfe4f8;-webkit-text-stroke:1.6px #1e73be;font-weight:bold;transform-origin:0 0;transform:scaleX(1.1650)">A</div>
<svg style="left:302px;top:132px;" width="8" height="5" viewBox="0 0 8 5"><path d="M0.5 0.5L4.0 3.5L7.5 0.5" fill="none" stroke="#424242" stroke-width="1.1"/></svg>
<svg style="left:323px;top:124px;" width="18" height="20" viewBox="0 0 18 20"><path d="M5 11L13.5 2.5L15.5 4.5L7 13L4 13.5Z" fill="#fff" stroke="#424242" stroke-width="1.1" stroke-linejoin="round"/><path d="M4 13.5L2.5 15" stroke="#424242"/></svg>
<div class="ab" style="left:324px;top:138.5px;width:16px;height:3.3px;background:#ffff00"></div>
<svg style="left:346px;top:132px;" width="8" height="5" viewBox="0 0 8 5"><path d="M0.5 0.5L4.0 3.5L7.5 0.5" fill="none" stroke="#424242" stroke-width="1.1"/></svg>
<div class="t" style="left:365.00px;top:123.80px;font-size:15px;color:#3a3a3a;transform-origin:0 0;transform:scaleX(1.1981)">A</div>
<div class="ab" style="left:365px;top:138.5px;width:16px;height:3.3px;background:#e00000"></div>
<svg style="left:387px;top:132px;" width="8" height="5" viewBox="0 0 8 5"><path d="M0.5 0.5L4.0 3.5L7.5 0.5" fill="none" stroke="#424242" stroke-width="1.1"/></svg>
<div class="t" style="left:232.50px;top:162.02px;font-size:12.5px;color:#242424;transform-origin:0 0;transform:scaleX(0.9194)">Font</div>
<svg style="left:396px;top:164px;" width="9" height="9" viewBox="0 0 9 9"><path d="M0.5 4V0.5H8.5V8.5H5" fill="none" stroke="#616161" stroke-width="1"/><path d="M3 3L7.5 7.5M7.5 4.5V7.5H4.5" fill="none" stroke="#616161" stroke-width="1"/></svg>
<div class="ab" style="left:416px;top:90px;width:38px;height:24px;background:#e6e6e6;border:1px solid #9a9a9a;border-radius:4px"></div>
<svg style="left:420px;top:94px;" width="16" height="16" viewBox="0 0 16 16"><rect x="0.5" y="1.5" width="3" height="3" fill="#1c72c4"/><rect x="0.5" y="6.5" width="3" height="3" fill="#1c72c4"/><rect x="0.5" y="11.5" width="3" height="3" fill="#1c72c4"/><path d="M5.5 2.5H14.5M5.5 7.5H14.5M5.5 13.5H14.5" stroke="#424242" stroke-width="1"/></svg>
<svg style="left:442px;top:101px;" width="8" height="5" viewBox="0 0 8 5"><path d="M0.5 0.5L4.0 3.5L7.5 0.5" fill="none" stroke="#424242" stroke-width="1.1"/></svg>
<svg style="left:460px;top:93px;" width="17" height="17" viewBox="0 0 17 17"><text x="0" y="5" font-size="5" fill="#1c72c4" font-family="Liberation Sans">1</text><text x="0" y="10.5" font-size="5" fill="#1c72c4" font-family="Liberation Sans">2</text><text x="0" y="16" font-size="5" fill="#1c72c4" font-family="Liberation Sans">3</text><path d="M6 3.5H16M6 9.5H16M6 14.5H16" stroke="#424242" stroke-width="1"/></svg>
<svg style="left:483px;top:101px;" width="8" height="5" viewBox="0 0 8 5"><path d="M0.5 0.5L4.0 3.5L7.5 0.5" fill="none" stroke="#424242" stroke-width="1.1"/></svg>
<svg style="left:502px;top:93px;" width="17" height="17" viewBox="0 0 17 17"><text x="0" y="5" font-size="5" fill="#1c72c4" font-family="Liberation Sans">1</text><text x="3" y="10.5" font-size="5" fill="#1c72c4" font-family="Liberation Sans">a</text><text x="5.5" y="16" font-size="5" fill="#1c72c4" font-family="Liberation Sans">i</text><path d="M5 3.5H15M8 9.5H15M9 14.5H15" stroke="#424242" stroke-width="1"/></svg>
<svg style="left:523px;top:101px;" width="8" height="5" viewBox="0 0 8 5"><path d="M0.5 0.5L4.0 3.5L7.5 0.5" fill="none" stroke="#424242" stroke-width="1.1"/></svg>
<div class="ab" style="left:540px;top:90px;width:1px;height:23px;background:#d1d1d1"></div>
<svg style="left:547px;top:94px;" width="16" height="15" viewBox="0 0 16 15"><path d="M6 1.5H15M9 5.5H15M9 9.5H15M1 13.5H15" stroke="#424242" stroke-width="1"/><path d="M7 7.5H1.5M4 5L1.5 7.5L4 10" fill="none" stroke="#1c72c4" stroke-width="1.1"/></svg>
<svg style="left:573px;top:94px;" width="16" height="15" viewBox="0 0 16 15"><path d="M6 1.5H15M9 5.5H15M9 9.5H15M1 13.5H15" stroke="#424242" stroke-width="1"/><path d="M0.5 7.5H6.5M4 5L6.5 7.5L4 10" fill="none" stroke="#1c72c4" stroke-width="1.1"/></svg>
<div class="ab" style="left:595px;top:90px;width:1px;height:23px;background:#d1d1d1"></div>
<svg style="left:600px;top:92px;" width="19" height="19" viewBox="0 0 19 19"><text x="0.5" y="8" font-size="8.5" fill="#1c72c4" font-family="Liberation Sans">A</text><text x="0.5" y="17.5" font-size="8.5" fill="#424242" font-family="Liberation Sans">Z</text><path d="M13.5 1V17M10 13.5L13.5 17L17 13.5" fill="none" stroke="#424242" stroke-width="1.1"/></svg>
<div class="ab" style="left:624px;top:90px;width:1px;height:23px;background:#d1d1d1"></div>
<div class="t" style="left:632.00px;top:93.96px;font-size:16px;color:#424242;font-weight:bold;transform-origin:0 0;transform:scaleX(1.2351)">¶</div>
<svg style="left:421px;top:127px;" width="15" height="15" viewBox="0 0 15 15"><path d="M0 1.5H14M0 5.5H10M0 9.5H14M0 13.5H10" stroke="#424242" stroke-width="1.1"/></svg>
<svg style="left:447px;top:127px;" width="15" height="15" viewBox="0 0 15 15"><path d="M0 1.5H14M2 5.5H12M0 9.5H14M2 13.5H12" stroke="#424242" stroke-width="1.1"/></svg>
<svg style="left:473px;top:127px;" width="15" height="15" viewBox="0 0 15 15"><path d="M0 1.5H14M4 5.5H14M0 9.5H14M4 13.5H14" stroke="#424242" stroke-width="1.1"/></svg>
<div class="ab" style="left:494px;top:122px;width:23px;height:24px;background:#e6e6e6;border:1px solid #9a9a9a;border-radius:4px"></div>
<svg style="left:499px;top:127px;" width="15" height="15" viewBox="0 0 15 15"><path d="M0 1.5H14M0 5.5H14M0 9.5H14M0 13.5H14" stroke="#424242" stroke-width="1.1"/></svg>
<div class="ab" style="left:520px;top:123px;width:1px;height:22px;background:#d1d1d1"></div>
<svg style="left:526px;top:126px;" width="18" height="17" viewBox="0 0 18 17"><path d="M3 1V15M0.8 3.3L3 1L5.2 3.3M0.8 12.7L3 15L5.2 12.7" fill="none" stroke="#1c72c4" stroke-width="1.1"/><path d="M8 2.5H17M8 6.5H17M8 10.5H17M8 14.5H17" stroke="#424242" stroke-width="1"/></svg>
<svg style="left:547px;top:132px;" width="8" height="5" viewBox="0 0 8 5"><path d="M0.5 0.5L4.0 3.5L7.5 0.5" fill="none" stroke="#424242" stroke-width="1.1"/></svg>
<div class="ab" style="left:565px;top:123px;width:1px;height:22px;background:#d1d1d1"></div>
<svg style="left:571px;top:124px;" width="19" height="19" viewBox="0 0 19 19"><path d="M4 9L9 3L13.5 7.5L8.5 12.5Z" fill="#fff" stroke="#424242" stroke-width="1.1" stroke-linejoin="round"/><path d="M12 2.5C14 3 15 5 15 7" fill="none" stroke="#1c72c4" stroke-width="1.2"/><rect x="1.5" y="14.5" width="15" height="3" fill="#f0f0f0" stroke="#9e9e9e"/></svg>
<svg style="left:594px;top:132px;" width="8" height="5" viewBox="0 0 8 5"><path d="M0.5 0.5L4.0 3.5L7.5 0.5" fill="none" stroke="#424242" stroke-width="1.1"/></svg>
<div class="ab" style="left:609px;top:122px;width:38px;height:24px;background:#e6e6e6;border:1px solid #9a9a9a;border-radius:4px"></div>
<svg style="left:614px;top:126px;" width="15" height="15" viewBox="0 0 15 15"><path d="M0.5 0.5H14.5M0.5 7H14.5M0.5 0.5V14M7.5 0.5V14M14.5 0.5V14" stroke="#424242" stroke-width="0.9" stroke-dasharray="1 1.2"/><path d="M0 14.3H15" stroke="#242424" stroke-width="1.3"/></svg>
<svg style="left:634px;top:132px;" width="8" height="5" viewBox="0 0 8 5"><path d="M0.5 0.5L4.0 3.5L7.5 0.5" fill="none" stroke="#424242" stroke-width="1.1"/></svg>
<div class="t" style="left:499.50px;top:162.02px;font-size:12.5px;color:#242424;transform-origin:0 0;transform:scaleX(0.8908)">Paragraph</div>
<svg style="left:647px;top:164px;" width="9" height="9" viewBox="0 0 9 9"><path d="M0.5 4V0.5H8.5V8.5H5" fill="none" stroke="#616161" stroke-width="1"/><path d="M3 3L7.5 7.5M7.5 4.5V7.5H4.5" fill="none" stroke="#616161" stroke-width="1"/></svg>
<div class="ab" style="left:668px;top:90px;width:351px;height:60px;border:1px solid #d1d1d1;border-radius:4px"></div>
<div class="ab" style="left:669px;top:91px;width:109px;height:57px;border:1px solid #6b6b6b;box-shadow:inset 0 0 0 2px #efefef"></div>
<div class="t" style="left:701.50px;top:112.73px;font-size:14.5px;color:#242424;transform-origin:0 0;transform:scaleX(0.9629)">Normal</div>
<div class="t" style="left:799.50px;top:114.07px;font-size:14.8px;color:#242424;transform-origin:0 0;transform:scaleX(1.0121)">Body Text</div>
<div class="t" style="left:906.50px;top:114.29px;font-size:13.6px;color:#242424;transform-origin:0 0;transform:scaleX(0.9533)">No Spacing</div>
<div class="ab" style="left:995px;top:90px;width:24px;height:60px;border:1px solid #6b6b6b;border-radius:0 4px 4px 0"></div>
<svg style="left:1002px;top:117px;" width="9" height="7" viewBox="0 0 9 7"><path d="M0.5 0.5H8.5" stroke="#424242"/><path d="M1.5 3L4.5 6L7.5 3" fill="none" stroke="#424242" stroke-width="1"/></svg>
<div class="t" style="left:822.50px;top:162.02px;font-size:12.5px;color:#242424;transform-origin:0 0;transform:scaleX(0.8224)">Styles</div>
<svg style="left:1018px;top:164px;" width="9" height="9" viewBox="0 0 9 9"><path d="M0.5 4V0.5H8.5V8.5H5" fill="none" stroke="#616161" stroke-width="1"/><path d="M3 3L7.5 7.5M7.5 4.5V7.5H4.5" fill="none" stroke="#616161" stroke-width="1"/></svg>
<svg style="left:1040px;top:85px;" width="32" height="30" viewBox="0 0 32 30"><circle cx="20.5" cy="10.5" r="9.9" fill="#fafafa" stroke="#3a3a3a" stroke-width="1.15"/><path d="M13.3 17.6L1.9 28.7" stroke="#3a3a3a" stroke-width="1.15"/></svg>
<div class="t" style="left:1038.00px;top:119.07px;font-size:13.5px;color:#242424;transform-origin:0 0;transform:scaleX(0.8963)">Editing</div>
<svg style="left:1053px;top:140px;" width="8" height="5" viewBox="0 0 8 5"><path d="M0.5 0.5L4.0 3.5L7.5 0.5" fill="none" stroke="#424242" stroke-width="1.1"/></svg>
<svg style="left:1129px;top:89px;" width="25" height="27" viewBox="0 0 25 27"><g fill="none" stroke="#1473e6" stroke-width="1.7" stroke-linecap="round" stroke-linejoin="round"><path d="M9.5 21.3H3.2A1.6 1.6 0 0 1 1.6 19.7V3.1A1.6 1.6 0 0 1 3.2 1.5H10.5L17 8.2V11"/><path d="M10.5 1.5V6.6A1.6 1.6 0 0 0 12.1 8.2H17"/><path d="M13.3 17.5H12A1.4 1.4 0 0 0 10.6 18.9V24A1.4 1.4 0 0 0 12 25.4H22.3A1.4 1.4 0 0 0 23.7 24V18.9A1.4 1.4 0 0 0 22.3 17.5H21"/><path d="M17 22V12.8M14.2 15.5L17 12.7L19.8 15.5"/></g></svg>
<div class="t" style="left:1095.50px;top:120.70px;font-size:13px;;transform-origin:0 0;transform:scaleX(0.8624)">Create and Share</div>
<div class="t" style="left:1110.50px;top:136.90px;font-size:13px;;transform-origin:0 0;transform:scaleX(0.8779)">Adobe PDF</div>
<svg style="left:1203px;top:86px;" width="33" height="29" viewBox="0 0 33 29"><g fill="none" stroke="#1473e6" stroke-width="1.7" stroke-linecap="round" stroke-linejoin="round"><path d="M11.5 24.3H3C1.5 24.3 0.8 23.2 1.2 21.8C2.2 18.5 4.5 16.2 8.2 14.6C6.7 13 6 11.2 6 8.5C6 4.2 8.5 1.6 12.2 1.6C15.9 1.6 18.2 4.2 18.2 8.5C18.2 10.8 17.5 12.8 16.2 14"/><path d="M16.2 14C17 14.6 18.2 14.8 19.2 14.6"/></g><path d="M15.5 21.2L19.2 24.8M19.2 21.2L15.5 24.8" stroke="#1473e6" stroke-width="1.4"/><path d="M21.3 24.6L24 20.8L26 24.4L28.5 20.8L30.3 23.8L32 21.5" fill="none" stroke="#1473e6" stroke-width="1.4" stroke-linejoin="round"/><path d="M14.5 27.8H31.8" stroke="#1473e6" stroke-width="1.9"/></svg>
<div class="t" style="left:1198.50px;top:120.70px;font-size:13px;;transform-origin:0 0;transform:scaleX(0.8364)">Request</div>
<div class="t" style="left:1191.00px;top:136.90px;font-size:13px;;transform-origin:0 0;transform:scaleX(0.8849)">Signatures</div>
<div class="t" style="left:1132.50px;top:162.02px;font-size:12.5px;color:#242424;transform-origin:0 0;transform:scaleX(0.9267)">Adobe Acrobat</div>
<svg style="left:1273px;top:86px;" width="30" height="30" viewBox="0 0 30 30"><rect x="1.3" y="1.3" width="27.5" height="27.5" fill="none" stroke="#d35230" stroke-width="1.5"/><g fill="none" stroke="#d35230" stroke-width="1.3"><rect x="4.6" y="4.6" width="8.9" height="8.9"/><rect x="16.6" y="4.6" width="8.9" height="8.9"/><rect x="4.6" y="16.6" width="8.9" height="8.9"/><rect x="16.6" y="16.6" width="8.9" height="8.9"/></g></svg>
<div class="t" style="left:1267.00px;top:120.70px;font-size:13px;;transform-origin:0 0;transform:scaleX(0.9529)">Add-ins</div>
<div class="t" style="left:1268.00px;top:162.02px;font-size:12.5px;color:#242424;transform-origin:0 0;transform:scaleX(0.9672)">Add-ins</div>
<svg style="left:1338px;top:160px;" width="13" height="8" viewBox="0 0 13 8"><path d="M0.7 0.7L6.2 6.2L11.7 0.7" fill="none" stroke="#424242" stroke-width="1.2"/></svg>
<div class="ab" style="left:0px;top:707px;width:1366px;height:21px;background:#f3f3f3"></div>
<div class="t" style="left:12.50px;top:712.29px;font-size:11px;color:#424242;transform-origin:0 0;transform:scaleX(0.9998)">Page 30 of 38</div>
<div class="t" style="left:99.50px;top:712.29px;font-size:11px;color:#424242;transform-origin:0 0;transform:scaleX(1.0374)">7469 words</div>
<div class="t" style="left:178.00px;top:712.29px;font-size:11px;color:#424242;transform-origin:0 0;transform:scaleX(1.0919)">Mongolian (Mongolia)</div>
<svg style="left:312px;top:709px;" width="16" height="16" viewBox="0 0 16 16"><circle cx="6.5" cy="2.8" r="1.9" fill="none" stroke="#303030" stroke-width="1.1"/><path d="M1.5 5.2C2 4.6 3 4.8 4.5 5.3C5.5 5.6 7.5 5.6 8.5 5.3C10 4.8 11 4.6 11.5 5.2C12 6 11 6.8 9.5 7.2V9.5L10.5 11.5M3.5 7.2C2 6.8 1 6 1.5 5.2M3.5 7.2V10L2 13.8C2.2 14.3 3 14.4 3.4 14L5.5 10.5" fill="none" stroke="#303030" stroke-width="1.05" stroke-linejoin="round"/><path d="M8.5 10.5L13.5 15.2M13.5 10.5L8.5 15.2" stroke="#303030" stroke-width="1.1"/></svg>
<div class="t" style="left:331.00px;top:712.29px;font-size:11px;color:#242424;font-weight:bold;transform-origin:0 0;transform:scaleX(0.9585)">Accessibility: Investigate</div>
<svg style="left:1006px;top:709px;" width="16" height="16" viewBox="0 0 16 16"><path d="M0.5 4V0.5H4M11 0.5H14.5V4M14.5 11V14.5H11M4 14.5H0.5V11" fill="none" stroke="#424242" stroke-width="1"/><path d="M3.5 2.5H9L11.5 5V12.5H3.5Z" fill="none" stroke="#424242" stroke-width="1"/></svg>
<div class="t" style="left:1025.00px;top:712.07px;font-size:11.5px;color:#424242;transform-origin:0 0;transform:scaleX(0.9416)">Focus</div>
<svg style="left:1078px;top:710px;" width="15" height="14" viewBox="0 0 15 14"><path d="M0.5 1.5H6A1.5 1.5 0 0 1 7.5 3V13.5H0.5ZM14.5 1.5H9A1.5 1.5 0 0 0 7.5 3V13.5H14.5Z" fill="none" stroke="#424242" stroke-width="1"/><path d="M2 5H6M2 7.5H6M2 10H6M9 5H13M9 7.5H13M9 10H13" stroke="#424242" stroke-width="0.9"/></svg>
<div class="ab" style="left:1106px;top:707px;width:40px;height:21px;background:#dcdcdc"></div>
<svg style="left:1119px;top:710px;" width="14" height="16" viewBox="0 0 14 16"><rect x="0.5" y="0.5" width="12" height="14" fill="none" stroke="#424242"/><path d="M3 3.5H10M3 6H10M3 8.5H10M3 11H10" stroke="#424242" stroke-width="0.9"/></svg>
<svg style="left:1158px;top:710px;" width="16" height="16" viewBox="0 0 16 16"><path d="M8 14.5H0.5V0.5H13.5V7" fill="none" stroke="#424242"/><path d="M0.5 3.5H13.5M2.5 6H9M2.5 8.5H7" stroke="#424242" stroke-width="0.9"/><circle cx="11.5" cy="11.5" r="3.8" fill="#fff" stroke="#424242"/><path d="M7.7 11.5H15.3M11.5 7.7C10 9.5 10 13.5 11.5 15.3M11.5 7.7C13 9.5 13 13.5 11.5 15.3" fill="none" stroke="#424242" stroke-width="0.8"/></svg>
<div class="ab" style="left:1192px;top:717px;width:9px;height:1px;background:#424242"></div>
<div class="ab" style="left:1205px;top:717px;width:100px;height:1px;background:#8a8a8a"></div>
<div class="ab" style="left:1253px;top:712px;width:5px;height:11px;background:#707070;border-radius:1px"></div>
<div class="ab" style="left:1309px;top:717px;width:9px;height:1px;background:#424242"></div>
<div class="ab" style="left:1313px;top:713px;width:1px;height:9px;background:#424242"></div>
<div class="t" style="left:1331.00px;top:712.49px;font-size:11px;color:#424242;transform-origin:0 0;transform:scaleX(0.9417)">100%</div>
<div class="ab" style="left:0;top:728px;width:1366px;height:40px;background:linear-gradient(90deg,#213841 0%,#223841 35%,#1f3040 58%,#1c2842 75%,#1b2543 100%)"></div>
<svg style="left:16px;top:739px;" width="17" height="17" viewBox="0 0 17 17"><path d="M0 2.5L7 1.5V8H0ZM8 1.4L16 0.3V8H8ZM0 9H7V15.5L0 14.5ZM8 9H16V16.7L8 15.6Z" fill="#fff"/></svg>
<div class="ab" style="left:48px;top:728px;width:288px;height:40px;background:#f1f1f1"></div>
<svg style="left:59px;top:738px;" width="20" height="20" viewBox="0 0 20 20"><circle cx="12.5" cy="7.5" r="6" fill="none" stroke="#242424" stroke-width="1.3"/><path d="M8.2 11.8L1 19" stroke="#242424" stroke-width="1.4"/></svg>
<div class="t" style="left:88.00px;top:741.46px;font-size:16px;color:#242424;transform-origin:0 0;transform:scaleX(0.9122)">Type here to search</div>
<svg style="left:260px;top:728px;" width="80" height="40" viewBox="0 0 80 40"><defs>
<linearGradient id="oc1" x1="0" y1="0" x2="0" y2="1"><stop offset="0" stop-color="#b7a0e8"/><stop offset="0.55" stop-color="#f08a5a"/><stop offset="1" stop-color="#f07040"/></linearGradient>
<linearGradient id="oc2" x1="0" y1="0" x2="1" y2="1"><stop offset="0" stop-color="#f9a060"/><stop offset="1" stop-color="#e9503a"/></linearGradient>
<linearGradient id="oc3" x1="0" y1="0" x2="1" y2="0"><stop offset="0" stop-color="#a898e0"/><stop offset="0.35" stop-color="#f07a50"/><stop offset="0.7" stop-color="#f07a50"/><stop offset="1" stop-color="#a0a8f0"/></linearGradient>
</defs>
<g fill="none" stroke-linecap="round">
<path d="M9 26C14 27 17 34 23 35.5C29 37 34 30 37 23" stroke="url(#oc3)" stroke-width="2.6"/>
<path d="M18.5 12.5C19 20 19 28 24 34" stroke="#b89ad8" stroke-width="1.8"/>
<path d="M22 15C24 16 26 20 27 23C29 25 32 24 35 22" stroke="#f08050" stroke-width="2.2"/>
<path d="M22 19C23 22 26 27 28 30" stroke="#d8a0d0" stroke-width="1.6"/>
<path d="M40 22C44 28 47 34 52 35C56 36 60 30 62 22C63 16 64 12 61.5 10.5" stroke="url(#oc3)" stroke-width="2.6"/>
<path d="M41 21C47 25 53 26 55 20C56 15 55.5 11 57 9" stroke="url(#oc1)" stroke-width="2.3"/>
<path d="M40 19C44 18 47 15 47 12C46.5 10.5 45 10.5 43.5 11.5" stroke="url(#oc1)" stroke-width="2.2"/>
<path d="M33 24C30 30 27 35 21 36" stroke="#f07a48" stroke-width="2.4"/>
<path d="M41 23C45 29 50 35 56 34" stroke="#ee7040" stroke-width="2.2"/>
</g>
<path d="M27.5 3.5C33 4 40 8 42 14L30 17C27 12 26 7 27.5 3.5Z" fill="#c9b4ee" opacity="0.9"/>
<ellipse cx="36" cy="17" rx="6.2" ry="6.8" transform="rotate(-25 36 17)" fill="url(#oc2)"/>
<circle cx="33" cy="18.8" r="1.2" fill="#2a2a5a"/><circle cx="38.8" cy="15.8" r="1.2" fill="#2a2a5a"/></svg>
<svg style="left:352px;top:740px;" width="16" height="16" viewBox="0 0 16 16"><circle cx="8" cy="8" r="6.8" fill="none" stroke="#fff" stroke-width="1.8"/></svg>
<svg style="left:399px;top:740px;" width="18" height="16" viewBox="0 0 18 16"><path d="M1 1.5H12M1 14.5H12" stroke="#fff" stroke-width="1.3"/><rect x="2.5" y="4.5" width="9" height="7" fill="none" stroke="#fff" stroke-width="1.3"/><path d="M15.5 0.5V15.5" stroke="#fff" stroke-width="1.3" stroke-dasharray="3 1.5"/></svg>
<svg style="left:446px;top:736px;" width="24" height="24" viewBox="0 0 24 24"><circle cx="12" cy="12" r="12" fill="#1877f2"/><path d="M13.5 24V15H16.5L17 11.5H13.5V9.3C13.5 8.3 13.8 7.6 15.3 7.6H17V4.5C16.7 4.4 15.6 4.3 14.4 4.3C11.8 4.3 10 5.9 10 8.8V11.5H7V15H10V24Z" fill="#fff"/></svg>
<svg style="left:493px;top:736px;" width="24" height="24" viewBox="0 0 24 24"><defs><linearGradient id="eg1" x1="0" y1="1" x2="1" y2="0"><stop offset="0" stop-color="#0c5ab0"/><stop offset="0.45" stop-color="#1a9de0"/><stop offset="0.75" stop-color="#38c8b8"/><stop offset="1" stop-color="#7ae060"/></linearGradient>
<linearGradient id="eg2" x1="0" y1="0" x2="1" y2="1"><stop offset="0" stop-color="#1c6fc8"/><stop offset="1" stop-color="#0b3f86"/></linearGradient></defs>
<circle cx="12" cy="12" r="11.8" fill="url(#eg1)"/>
<path d="M1 10C2 17 7 23 13 23.8C17 24 20 22.5 22 20C19 21.5 14 21.5 11 19C8 16.5 8 12.5 11 10.5C7 9.5 2.5 9 1 10Z" fill="url(#eg2)"/>
<path d="M24 13C23 16 21 18 17.5 18.2C14 18.3 11.5 16.5 11.6 14C11.7 11.8 13.5 10.5 16 10.5C19.5 10.5 22.5 11.5 24 13Z" fill="#1e2f3a"/></svg>
<svg style="left:540px;top:738px;" width="23" height="20" viewBox="0 0 23 20"><path d="M0.5 1.5H8L10 3.5H22.5V19.5H0.5Z" fill="#e8a317"/><rect x="0.5" y="5.5" width="22" height="14" fill="#ffd75e"/><path d="M6 19.5V13.5H17V19.5H14.5V16H8.5V19.5Z" fill="#2b7cd3"/></svg>
<svg style="left:587px;top:736px;" width="24" height="24" viewBox="0 0 24 24"><path d="M8 6V4A4 4 0 0 1 16 4V6" fill="none" stroke="#fff" stroke-width="1.4"/><rect x="1" y="6" width="22" height="17.5" rx="1.5" fill="#fff"/><rect x="7" y="10" width="4.5" height="4.5" fill="#f25022"/><rect x="12.5" y="10" width="4.5" height="4.5" fill="#7fba00"/><rect x="7" y="15.5" width="4.5" height="4.5" fill="#00a4ef"/><rect x="12.5" y="15.5" width="4.5" height="4.5" fill="#ffb900"/></svg>
<svg style="left:633px;top:737px;" width="26" height="21" viewBox="0 0 26 21"><path d="M0.5 7.5L13 0.5L25.5 7.5V20.5H0.5Z" fill="#fff"/><path d="M0.5 7.5L15 13.5M25.5 7.5L14.5 12.5L22.5 19" fill="none" stroke="#1e2f3a" stroke-width="1.2"/></svg>
<svg style="left:685px;top:737px;" width="16" height="21" viewBox="0 0 16 21"><path d="M0.5 0.5H11L15.5 5V20.5H0.5Z" fill="#fff"/><path d="M11 0.5V5H15.5" fill="#ddd" stroke="#ccc" stroke-width="0.6"/></svg>
<svg style="left:728px;top:736px;" width="24" height="24" viewBox="0 0 24 24"><defs><linearGradient id="ig1" x1="0" y1="1" x2="1" y2="0"><stop offset="0" stop-color="#fdc245"/><stop offset="0.35" stop-color="#f5533d"/><stop offset="0.7" stop-color="#c32aa3"/><stop offset="1" stop-color="#5b4fe9"/></linearGradient></defs>
<rect x="0" y="0" width="24" height="24" rx="6" fill="url(#ig1)"/><rect x="4.5" y="4.5" width="15" height="15" rx="4.3" fill="none" stroke="#fff" stroke-width="1.7"/><circle cx="12" cy="12" r="3.6" fill="none" stroke="#fff" stroke-width="1.7"/><circle cx="16.6" cy="7.4" r="1" fill="#fff"/></svg>
<svg style="left:775px;top:736px;" width="24" height="24" viewBox="0 0 24 24"><circle cx="12" cy="12" r="12" fill="#db4437"/><path d="M12 12L1.6 6A12 12 0 0 0 12 24Z" fill="#0f9d58"/><path d="M12 12L12 24A12 12 0 0 0 22.4 6L12 6Z" fill="#ffcd40"/><path d="M12 12H22.4A12 12 0 0 0 21 4" fill="#db4437"/><circle cx="12" cy="12" r="5.3" fill="#fff"/><circle cx="12" cy="12" r="4.2" fill="#4285f4"/></svg>
<svg style="left:824px;top:737px;" width="16" height="21" viewBox="0 0 16 21"><path d="M0.5 0.5H11L15.5 5V20.5H0.5Z" fill="#fff"/><path d="M11 0.5V5H15.5" fill="#ddd" stroke="#ccc" stroke-width="0.6"/></svg>
<svg style="left:867px;top:737px;" width="24" height="24" viewBox="0 0 24 24"><rect x="0" y="0" width="24" height="24" fill="#ef443b"/><path d="M8 6.5L13.5 12L8 17.5L2.5 12Z" fill="#fff"/><path d="M14 7.5L18.5 12L14 16.5L12.8 15.3L16.1 12L12.8 8.7Z" fill="#fff"/></svg>
<svg style="left:913px;top:735px;" width="24" height="25" viewBox="0 0 24 25"><defs><radialGradient id="ff1" cx="0.7" cy="0.2" r="0.9"><stop offset="0" stop-color="#ffe226"/><stop offset="0.45" stop-color="#ff7139"/><stop offset="1" stop-color="#e31587"/></radialGradient></defs>
<path d="M12 24.5C5.5 24.5 0.5 19.5 0.5 13C0.5 9 2.5 6 4.5 4.5C4.5 6 5 7 6 7.5C7 4.5 9.5 2 12 1C11 3 11.5 5 13 6C17 6 22 8 23.3 12C24 19 18.5 24.5 12 24.5Z" fill="url(#ff1)"/>
<circle cx="12.5" cy="13.5" r="6" fill="#7c3fc9"/><path d="M6.5 12C7.5 9.5 11 8.5 13.5 9.5C11 10 9.5 12 10 14C10.5 16 14 17 16.5 15.5C15 18.5 10.5 19.5 8 17.5C6.5 16 6 14 6.5 12Z" fill="#ff9f2e"/></svg>
<div class="ab" style="left:949px;top:728px;width:45px;height:40px;background:#4c5863"></div>
<svg style="left:958px;top:737px;" width="26" height="22" viewBox="0 0 26 22"><rect x="7" y="0" width="18" height="21" fill="#41a5ee"/><rect x="7" y="5.2" width="18" height="5.3" fill="#2b7cd3"/><rect x="7" y="10.5" width="18" height="5.2" fill="#185abd"/><rect x="7" y="15.7" width="18" height="5.3" fill="#103f91"/>
<rect x="1" y="5" width="12.5" height="12" fill="#185abd"/><path d="M2.8 7.6L4.6 14.6L7.2 9.8L9.8 14.6L11.6 7.6" stroke="#fff" stroke-width="1.6" fill="none" stroke-linejoin="round"/></svg>
<div class="ab" style="left:439px;top:766px;width:30px;height:2px;background:#76b9ed"></div>
<div class="ab" style="left:486px;top:766px;width:38px;height:2px;background:#76b9ed"></div>
<div class="ab" style="left:533px;top:766px;width:38px;height:2px;background:#76b9ed"></div>
<div class="ab" style="left:674px;top:766px;width:38px;height:2px;background:#76b9ed"></div>
<div class="ab" style="left:768px;top:766px;width:29px;height:2px;background:#76b9ed"></div>
<div class="ab" style="left:861px;top:766px;width:37px;height:2px;background:#76b9ed"></div>
<div class="ab" style="left:907px;top:766px;width:28px;height:2px;background:#76b9ed"></div>
<div class="ab" style="left:949px;top:766px;width:45px;height:2px;background:#76b9ed"></div>
<div class="ab" style="left:469px;top:766px;width:8px;height:2px;background:#5f8fb8"></div>
<div class="ab" style="left:797px;top:766px;width:9px;height:2px;background:#5f8fb8"></div>
<div class="ab" style="left:935px;top:766px;width:9px;height:2px;background:#5f8fb8"></div>
<svg style="left:1027px;top:738px;" width="30" height="20" viewBox="0 0 30 20"><path d="M5 17.5C2 17.5 0.5 15.5 0.5 13.5C0.5 11 2.5 9.5 5 9.5C5.5 6 8.5 4 12 4C16 4 19 7 19.5 10C22.5 10 24.5 12 24.5 14C24.5 16 23 17.5 20.5 17.5Z" fill="#c4dcf5"/><path d="M5 17.5C2 17.5 0.5 15.5 0.5 13.5C0.5 12 1 11 2 10.5C4 12 20 13 24 13C24.5 14 24.5 14 24.5 14C24.5 16 23 17.5 20.5 17.5Z" fill="#a6c8ee"/><circle cx="19" cy="4.5" r="5.3" fill="#c42b1c"/><text x="17.4" y="7.5" font-size="7.5" fill="#fff" font-family="Liberation Sans">1</text></svg>
<div class="t" style="left:1060.00px;top:740.70px;font-size:15px;color:#fff;transform-origin:0 0;transform:scaleX(0.8536)">2°C</div>
<svg style="left:1098px;top:743px;" width="14" height="9" viewBox="0 0 14 9"><path d="M0.8 8L7 1.5L13.2 8" fill="none" stroke="#fff" stroke-width="1.3"/></svg>
<svg style="left:1122px;top:740px;" width="16" height="16" viewBox="0 0 16 16"><path d="M1 15A14 14 0 0 1 15 1M4 15A11 11 0 0 1 15 4M7 15A8 8 0 0 1 15 7M10 15A5 5 0 0 1 15 10" fill="none" stroke="#fff" stroke-width="1.1"/><circle cx="13.5" cy="13.5" r="1.6" fill="#fff"/></svg>
<svg style="left:1147px;top:739px;" width="13" height="18" viewBox="0 0 13 18"><rect x="1" y="5" width="8" height="8" rx="2" fill="none" stroke="#fff" stroke-width="1.1"/><path d="M9 7.5L12 5.5V12.5L9 10.5" fill="none" stroke="#fff" stroke-width="1.1"/><path d="M2 2.5A6 3 0 0 1 10 2.5M2 15.5A6 3 0 0 0 10 15.5" fill="none" stroke="#fff" stroke-width="1"/></svg>
<svg style="left:1169px;top:742px;" width="17" height="11" viewBox="0 0 17 11"><rect x="0.7" y="1" width="13.5" height="9" rx="1" fill="none" stroke="#fff" stroke-width="1.2"/><rect x="2.5" y="3" width="6" height="5" fill="#fff"/><rect x="14.5" y="3.5" width="2" height="4" fill="#fff"/></svg>
<svg style="left:1192px;top:740px;" width="18" height="16" viewBox="0 0 18 16"><path d="M1 5.5H4L8.5 1.5V14.5L4 10.5H1Z" fill="none" stroke="#fff" stroke-width="1.1" stroke-linejoin="round"/><path d="M11 5A4 4 0 0 1 11 11M13.5 3A7 7 0 0 1 13.5 13M16 1A10 10 0 0 1 16 15" fill="none" stroke="#fff" stroke-width="1.1"/></svg>
<div class="t" style="left:1216.50px;top:741.45px;font-size:14px;color:#fff;transform-origin:0 0;transform:scaleX(0.8570)">МОН</div>
<div class="t" style="left:1259.00px;top:731.77px;font-size:13.5px;color:#fff;transform-origin:0 0;transform:scaleX(0.8681)">7:05 AM</div>
<div class="t" style="left:1255.50px;top:749.37px;font-size:13.5px;color:#fff;transform-origin:0 0;transform:scaleX(0.8574)">10/9/2025</div>
<svg style="left:1324px;top:738px;" width="28" height="28" viewBox="0 0 28 28"><path d="M1 1H20V14H10L6 17.5V14H1Z" fill="#fff"/><path d="M4 5H17M4 8.5H17" stroke="#1b2543" stroke-width="1"/><circle cx="17" cy="17.5" r="8.5" fill="#2d2d2d" stroke="#888" stroke-width="1"/><text x="13.8" y="22" font-size="12" fill="#fff" font-family="Liberation Sans">1</text></svg>
<div class="ab" style="left:1360px;top:728px;width:1px;height:40px;background:#5a6270"></div>
</body></html>
